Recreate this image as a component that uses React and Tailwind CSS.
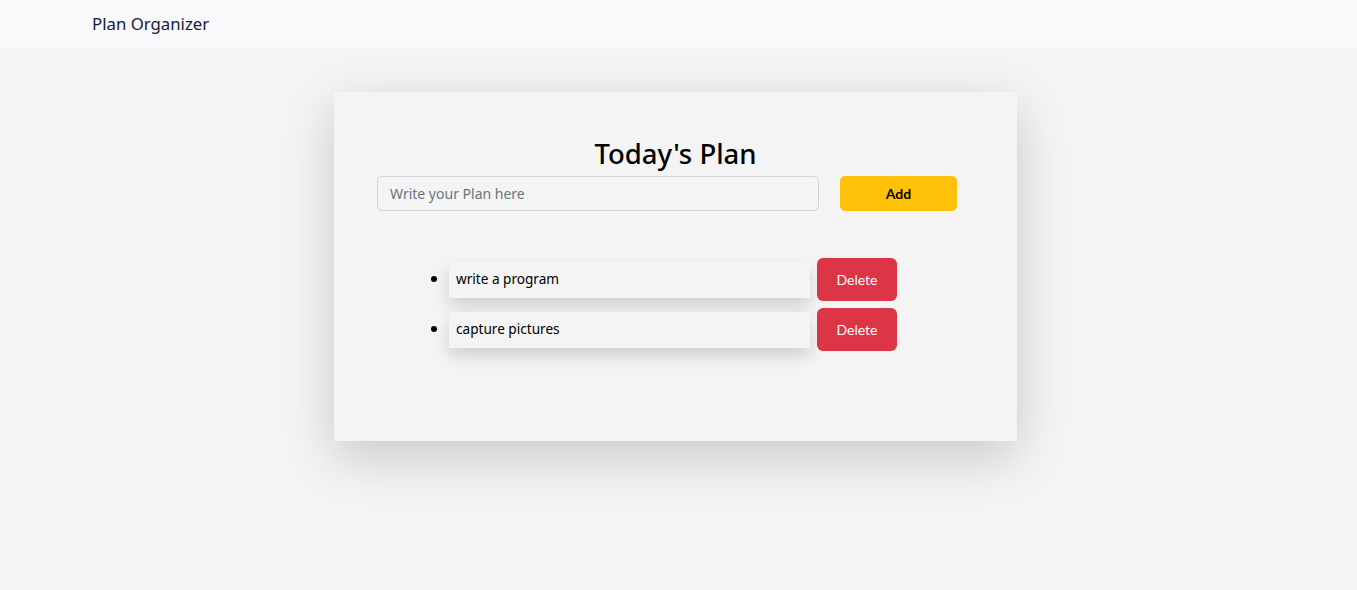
import React, { useState } from 'react';

const App = () => {
    const [plan, setPlan] = useState('');
    const [items, setItems] = useState(['write a program', 'capture pictures']);

    const addPlan = () => {
        if (!plan.trim()) return;
        setItems([...items, plan]);
        setPlan('');
    };

    const removePlan = (idx) => setItems(items.filter((_, i) => i !== idx));

    return (
        <div className="min-h-[590px] bg-[#f4f4f4] font-['Noto_Sans',sans-serif]">
            {/* navbar */}
            <nav className="h-12 bg-[#f8f9fa] flex items-center pl-[92px]">
                <span className="text-[16.8px] text-[#1a1a3a]">Plan Organizer</span>
            </nav>

            <div className="pt-11">
                <div className="w-[683px] h-[349px] mx-auto -translate-x-[3px] bg-[#f4f4f4] shadow-[0_16px_48px_rgba(0,0,0,0.175)] pt-[42px] pl-[43px]">
                    <h1 className="w-[597px] text-center text-[27.5px] leading-[40px] font-medium text-black">Today's Plan</h1>
                    <div className="flex items-center gap-[21px] mt-[2px]">
                        <input
                            className="w-[442px] h-[35px] rounded-[5px] border border-[#ced4da] bg-[#f4f4f4] px-3 text-[14px] text-[#212529] placeholder:text-[#6c757d] outline-none"
                            placeholder="Write your Plan here"
                            value={plan}
                            onChange={e => setPlan(e.target.value)}
                        />
                        <button onClick={addPlan} className="w-[117px] h-[35px] rounded-[5px] bg-[#ffc107] text-[14px] font-bold text-black font-['Lato',sans-serif]">
                            Add
                        </button>
                    </div>

                    <ul className="list-disc mt-[47px] pl-[72px] space-y-[7px] text-black">
                        {items.map((item, idx) => (
                            <li key={idx}>
                                <div className="flex items-center gap-[7px]">
                                    <div className="w-[361px] h-9 bg-[#f4f4f4] shadow-[0_8px_16px_rgba(0,0,0,0.15)] flex items-center px-[7px] text-[13.6px]">
                                        {item}
                                    </div>
                                    <button onClick={() => removePlan(idx)} className="w-20 h-[43px] rounded-[6px] bg-[#dc3545] text-white text-[14px] font-['Lato',sans-serif]">
                                        Delete
                                    </button>
                                </div>
                            </li>
                        ))}
                    </ul>
                </div>
            </div>
        </div>
    );
};

export default App;
